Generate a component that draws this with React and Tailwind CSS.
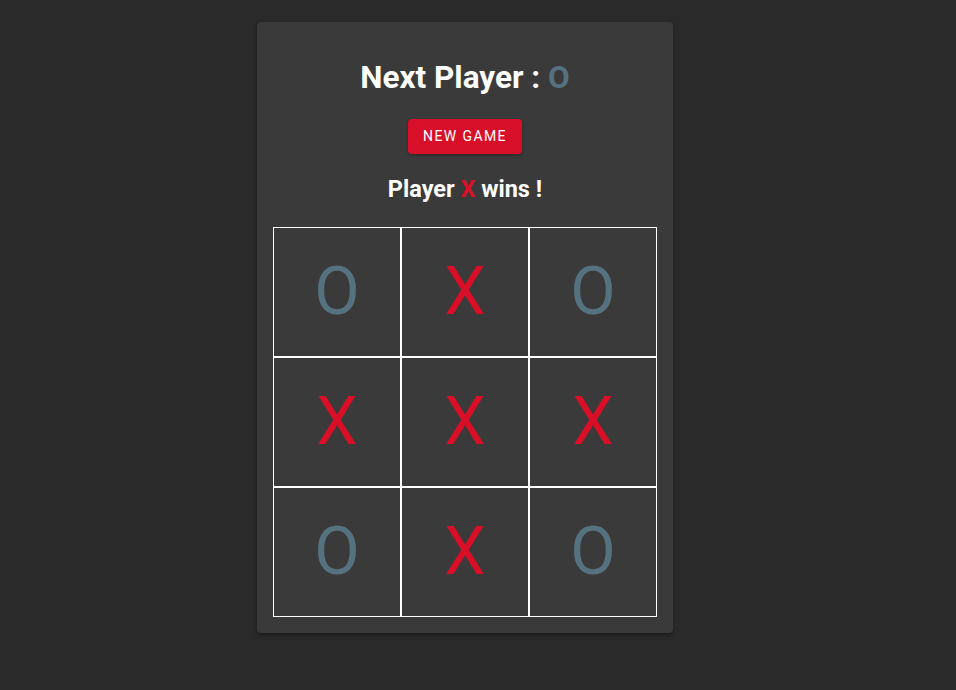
import React, { useState } from 'react';

const initialBoard = ['O', 'X', 'O', 'X', 'X', 'X', 'O', 'X', 'O'];

const markColor = (v) => (v === 'X' ? 'text-[#d90f28]' : 'text-[#56717f]');

const App = () => {
  const [board, setBoard] = useState(initialBoard);
  const [next, setNext] = useState('O');

  const newGame = () => {
    setBoard(Array(9).fill(''));
    setNext('X');
  };

  return (
    <div className="min-h-screen bg-[#2a2a2a] pt-[22px] font-['Roboto',sans-serif]">
      <div className="ml-[257px] flex w-[416px] flex-col items-center rounded-[4px] bg-[#3a3a3a] px-4 pb-4 pt-[37px] shadow-[0_2px_4px_rgba(0,0,0,0.35)]">
        {/* header */}
        <h1 className="h-[37px] text-[31.5px] font-bold leading-[37px] text-white">
          Next Player : <span className={markColor(next)}>{next}</span>
        </h1>
        <button
          onClick={newGame}
          className="mt-[23px] h-[35px] w-[114px] rounded-[4px] bg-[#d80f29] text-[14px] font-normal uppercase tracking-[1.4px] text-white shadow-[0_1px_3px_rgba(0,0,0,0.3)]"
        >
          New Game
        </button>
        <h2 className="mt-[21px] h-[28px] text-[23.5px] font-bold leading-[28px] text-white">
          Player <span className="text-[#d90f28]">X</span> wins !
        </h2>

        {/* board */}
        <div className="mt-6 grid w-[384px] grid-cols-3">
          {board.map((v, i) => (
            <div
              key={i}
              className={`flex h-[130px] items-center justify-center border border-white text-[66px] leading-none ${markColor(v)}`}
            >
              {v}
            </div>
          ))}
        </div>
      </div>
    </div>
  );
};

export default App;
